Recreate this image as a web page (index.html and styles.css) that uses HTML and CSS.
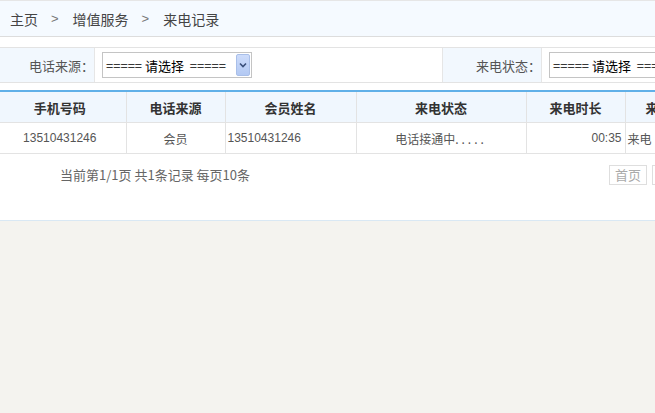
FILE: index.html
```html
<!DOCTYPE html>
<html lang="zh-CN">
<head>
<meta charset="utf-8">
<title>来电记录</title>
<link rel="stylesheet" href="styles.css">
</head>
<body>
<div class="panel">
  <div class="crumb">
    <span>主页</span><span class="sep">&gt;</span><span>增值服务</span><span class="sep">&gt;</span><span>来电记录</span>
  </div>
  <div class="filter">
    <div class="lbl">电话来源：</div>
    <div class="fcell">
      <div class="sel"><span class="sel-text">===== 请选择  =====</span><span class="sel-btn"><svg width="8" height="6" viewBox="0 0 8 6"><path d="M1 1.5 L4 4.5 L7 1.5" fill="none" stroke="#3a4f7a" stroke-width="1.6"/></svg></span></div>
    </div>
    <div class="lbl lbl2">来电状态：</div>
    <div class="fcell">
      <div class="sel"><span class="sel-text">===== 请选择  =====</span><span class="sel-btn"><svg width="8" height="6" viewBox="0 0 8 6"><path d="M1 1.5 L4 4.5 L7 1.5" fill="none" stroke="#3a4f7a" stroke-width="1.6"/></svg></span></div>
    </div>
  </div>
  <table class="grid">
    <colgroup>
      <col class="c1"><col class="c2"><col class="c3"><col class="c4"><col class="c5"><col class="c6">
    </colgroup>
    <thead>
      <tr><th class="first">手机号码</th><th>电话来源</th><th>会员姓名</th><th>来电状态</th><th>来电时长</th><th class="left">来电类型</th></tr>
    </thead>
    <tbody>
      <tr><td class="first">13510431246</td><td>会员</td><td class="left">13510431246</td><td>电话接通中<span class="dots">.....</span></td><td class="right">00:35</td><td class="left">来电</td></tr>
    </tbody>
  </table>
  <div class="pager">
    <div class="info">当前第1/1页 共1条记录 每页10条</div>
    <div class="btns"><span class="pbtn">首页</span><span class="pbtn">上一页</span></div>
  </div>
</div>
</body>
</html>
```
FILE: styles.css
```css
html, body {
  margin: 0;
  padding: 0;
}
body {
  background: #f4f3ef;
  font-family: "Liberation Sans", "Noto Sans CJK SC", sans-serif;
  color: #555;
  overflow: hidden;
  width: 655px;
}
.panel {
  background: #fff;
  width: 655px;
  overflow: hidden;
  border-bottom: 1px solid #d9e8f4;
}
.crumb {
  height: 35px;
  border-top: 1px solid #e6e6e6;
  border-bottom: 1px solid #dddddd;
  background: #f5faff;
  display: flex;
  align-items: center;
  padding-left: 10px;
  font-size: 14px;
  color: #444;
  font-family: "Noto Sans CJK SC", sans-serif;
}
.crumb .sep {
  margin: 0 14px 0 13px;
  color: #777;
  font-family: "Liberation Sans", sans-serif;
  font-size: 13px;
}
.filter {
  margin-top: 10px;
  height: 34px;
  border-top: 1px solid #e3e3e3;
  border-bottom: 1px solid #e3e3e3;
  display: grid;
  grid-template-columns: 95px 347px 100px 1fr;
}
.lbl {
  background: #f2f8fe;
  border-right: 1px solid #e6e6e6;
  display: flex;
  align-items: center;
  justify-content: flex-end;
  padding-right: 0;
  font-size: 13px;
  color: #555;
  font-family: "Noto Sans CJK SC", sans-serif;
}
.lbl2 {
  border-left: 1px solid #e6e6e6;
}
.fcell {
  display: flex;
  align-items: center;
  padding-left: 7px;
}
.sel {
  width: 148px;
  height: 24px;
  border: 1px solid #c4c4c4;
  display: flex;
  align-items: center;
  justify-content: space-between;
  background: #fff;
  flex: none;
}
.sel-text {
  font-size: 13px;
  color: #000;
  padding-left: 3px;
  white-space: pre;
  font-family: "Noto Sans CJK SC", sans-serif;
}
.sel-btn {
  width: 14px;
  height: 22px;
  margin-right: 1px;
  background: linear-gradient(#cddcfb, #b3c9f3);
  border: 1px solid #a9bfe9;
  box-sizing: border-box;
  border-radius: 2px;
  display: flex;
  align-items: center;
  justify-content: center;
}
.grid {
  margin-top: 7px;
  border-collapse: collapse;
  table-layout: fixed;
  width: 800px;
  font-family: "Noto Sans CJK SC", sans-serif;
}
.c1 { width: 126px; }
.c2 { width: 99px; }
.c3 { width: 131px; }
.c4 { width: 170px; }
.c5 { width: 99px; }
.c6 { width: 175px; }
.grid th {
  height: 30px;
  background: #f0f7fe;
  border-top: 2px solid #60b0e8;
  border-bottom: 1px solid #e3e3e3;
  border-left: 1px solid #e3e3e3;
  font-size: 13px;
  font-weight: bold;
  color: #333;
  padding: 0;
  text-align: center;
  white-space: nowrap;
  overflow: hidden;
}
.grid td {
  height: 30px;
  border-bottom: 1px solid #e3e3e3;
  border-left: 1px solid #e3e3e3;
  font-size: 12px;
  color: #555;
  padding: 0;
  text-align: center;
  white-space: nowrap;
  overflow: hidden;
}
.grid .first {
  border-left: none;
  padding-right: 6px;
}
.grid td.left, .grid th.left {
  text-align: left;
  padding-left: 2px;
}
.grid th.left {
  padding-left: 20px;
}
.grid td.right {
  text-align: right;
  padding-right: 3px;
}
.grid td:nth-child(1), .grid td:nth-child(3), .grid td:nth-child(5) {
  font-family: "Liberation Sans", sans-serif;
}
.dots {
  letter-spacing: 3px;
}
.pager {
  height: 66px;
  display: flex;
  justify-content: space-between;
  padding-top: 11px;
  box-sizing: border-box;
}
.info {
  padding-left: 60px;
  font-size: 13px;
  color: #666;
  line-height: 20px;
  font-family: "Noto Sans CJK SC", sans-serif;
}
.btns {
  display: flex;
  gap: 5px;
  margin-right: -48px;
}
.pbtn {
  height: 18px;
  line-height: 18px;
  padding: 0 5px;
  border: 1px solid #dedede;
  font-size: 13px;
  color: #aaa;
  font-family: "Noto Sans CJK SC", sans-serif;
}
```
